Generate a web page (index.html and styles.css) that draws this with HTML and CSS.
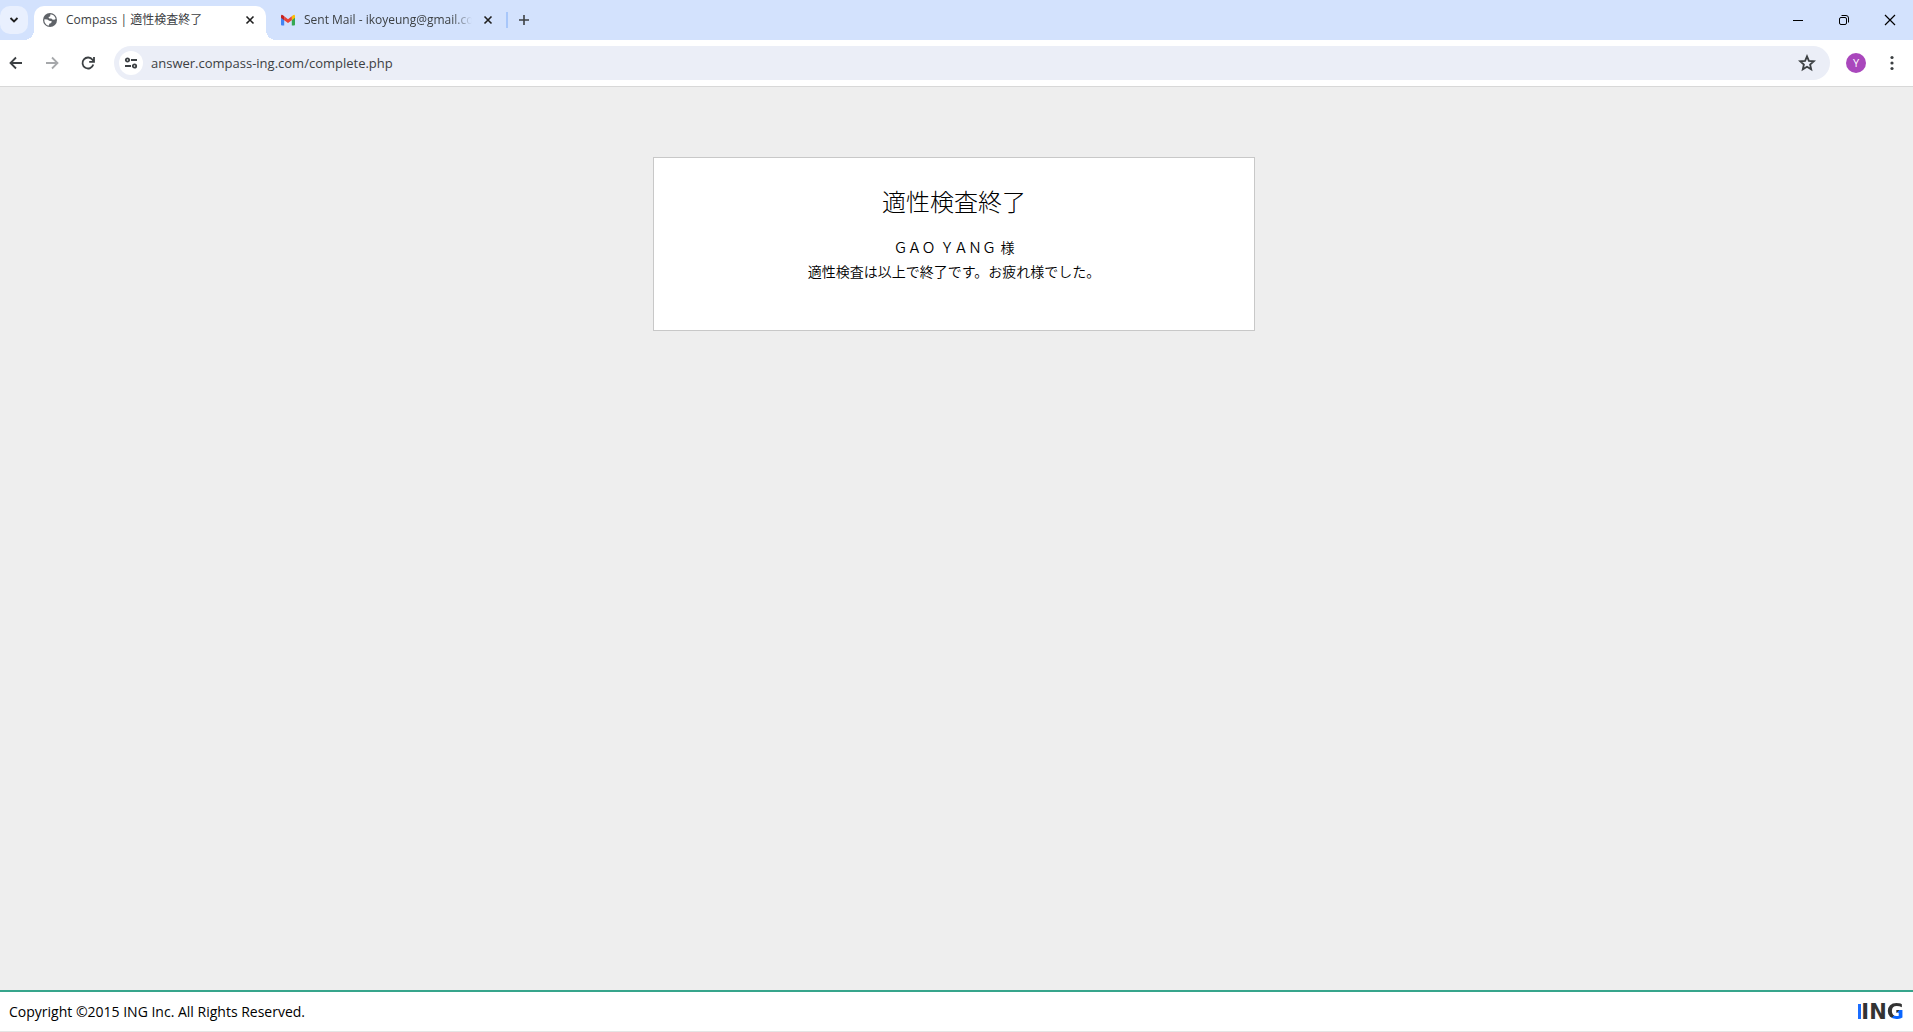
FILE: index.html
```
<!DOCTYPE html>
<html lang="ja">
<head>
<meta charset="utf-8">
<title>Compass | 適性検査終了</title>
<meta name="viewport" content="width=device-width, initial-scale=1">
<link rel="stylesheet" href="styles.css">
</head>
<body>
<header class="browser">
  <div class="tab-strip">
    <button class="tab-search" aria-label="Search tabs"><svg width="10" height="8" viewBox="0 0 10 8"><path d="M1.500 2 5 5.500 8.500 2" fill="none" stroke="currentColor" stroke-width="1.800"/></svg></button>
    <div class="tab tab-active">
      <svg class="favicon" width="16" height="16" viewBox="0 0 16 16"><circle cx="8" cy="8" r="7" fill="#5f6368"/><path d="M8.500 2.300c2.500.1 4.600 1.900 5.100 4.300l-.5 1-2.300.1-1.500-1.300-2 .2-.9-1.500 1.700-.7zM2.400 7.200l3 .4 1.800 1.100 2.600.5-.6 1.700-1.900.8-.4 1.900C4.200 13.300 2 10.600 2.400 7.200z" fill="#fff"/></svg>
      <span class="tab-title">Compass | 適性検査終了</span>
      <button class="tab-close" aria-label="Close tab"><svg width="10" height="10" viewBox="0 0 10 10"><path d="M1.500 1.500l7 7m0-7l-7 7" stroke="currentColor" stroke-width="1.600"/></svg></button>
    </div>
    <div class="tab tab-mail">
      <svg class="favicon" width="16" height="16" viewBox="0 0 16 16"><path d="M1 4v8.500q0 1 1 1h2.200V7.200z" fill="#4285f4"/><path d="M15 4v8.500q0 1-1 1h-2.200V7.200z" fill="#34a853"/><path d="M11.800 4.200 13 3.200q2-1 2 1v1.500l-3.200 2.500z" fill="#fbbc04"/><path d="M4.200 4.200 8 7.200l3.800-3v4L8 11.100 4.200 8.200z" fill="#ea4335"/><path d="M1 5.700V4.200q0-2 2-1l1.200 1v4z" fill="#c5221f"/></svg>
      <span class="tab-title tab-title-fade">Sent Mail - ikoyeung@gmail.co</span>
      <button class="tab-close" aria-label="Close tab"><svg width="10" height="10" viewBox="0 0 10 10"><path d="M1.500 1.500l7 7m0-7l-7 7" stroke="currentColor" stroke-width="1.600"/></svg></button>
    </div>
    <button class="new-tab" aria-label="New tab"><svg width="12" height="12" viewBox="0 0 12 12"><path d="M6 1v10M1 6h10" stroke="currentColor" stroke-width="1.600"/></svg></button>
    <div class="window-controls">
      <button aria-label="Minimize"><svg width="10" height="10" viewBox="0 0 10 10"><path d="M0 5.500h10" stroke="currentColor"/></svg></button>
      <button aria-label="Restore"><svg width="10" height="10" viewBox="0 0 10 10" fill="none" stroke="currentColor"><rect x=".5" y="2.500" width="7" height="7" rx="1.500"/><path d="M2.500.5H7Q9.500.5 9.500 3v4.500"/></svg></button>
      <button aria-label="Close"><svg width="12" height="12" viewBox="0 0 12 12"><path d="M1 1l10 10M11 1L1 11" stroke="currentColor" stroke-width="1.200"/></svg></button>
    </div>
  </div>
  <div class="toolbar">
    <button class="nav-button" aria-label="Back"><svg width="16" height="16" viewBox="0 0 16 16" fill="none" stroke="currentColor" stroke-width="1.800"><path d="M14 8H3M8 2.500 2.500 8 8 13.500"/></svg></button>
    <button class="nav-button" aria-label="Forward" disabled><svg width="16" height="16" viewBox="0 0 16 16" fill="none" stroke="currentColor" stroke-width="1.800"><path d="M2 8h11M8 2.500 13.500 8 8 13.500"/></svg></button>
    <button class="nav-button" aria-label="Reload"><svg width="16" height="16" viewBox="0 0 16 16" fill="none" stroke="currentColor" stroke-width="1.800"><path d="M13.300 9.500A5.500 5.500 0 1 1 12.500 4.800L13.800 6.500M14 2v4.800H9.200"/></svg></button>
    <div class="address">
      <button class="site-info" aria-label="View site information"><svg width="14" height="14" viewBox="0 0 14 14" fill="none" stroke="currentColor" stroke-width="1.800"><circle cx="3.500" cy="4" r="1.700"/><path d="M7 4h6M1 10h6"/><circle cx="10.500" cy="10" r="1.700"/></svg></button>
      <input class="url" type="text" aria-label="Address" value="answer.compass-ing.com/complete.php">
      <button class="bookmark" aria-label="Bookmark this page"><svg width="18" height="18" viewBox="0 0 18 18"><path d="M9 2.400l1.900 4.500 4.900.4-3.700 3.200 1.100 4.800L9 12.700l-4.200 2.600 1.100-4.800-3.700-3.200 4.900-.4z" fill="none" stroke="currentColor" stroke-width="1.800"/></svg></button>
    </div>
    <button class="profile" aria-label="Profile">Y</button>
    <button class="menu" aria-label="Menu"><svg width="4" height="16" viewBox="0 0 4 16" fill="currentColor"><circle cx="2" cy="2.500" r="1.600"/><circle cx="2" cy="8" r="1.600"/><circle cx="2" cy="13.500" r="1.600"/></svg></button>
  </div>
</header>
<main class="page">
  <section class="card">
    <h1>適性検査終了</h1>
    <p>ＧＡＯ ＹＡＮＧ 様</p>
    <p>適性検査は以上で終了です。お疲れ様でした。</p>
  </section>
</main>
<footer class="footer">
  <small>Copyright ©2015 ING Inc. All Rights Reserved.</small>
  <span class="logo">IN<span class="logo-g">G</span></span>
</footer>
</body>
</html>
```
FILE: styles.css
```
* { box-sizing: border-box; }
html { height: 100%; }
body {
  margin: 0;
  min-height: 100%;
  display: flex;
  flex-direction: column;
  background: #eee;
  color: #000;
  font: 14px/24px "DejaVu Sans", "Noto Sans CJK JP", sans-serif;
}
button {
  display: flex;
  align-items: center;
  justify-content: center;
  flex: none;
  padding: 0;
  border: 0;
  background: none;
  color: inherit;
  font: inherit;
}
svg { display: block; flex: none; }

.browser {
  border-bottom: 1px solid #d8d8d8;
  background: #fff;
  color: #3c4043;
  font-family: "Open Sans", "Noto Sans CJK JP", sans-serif;
}
.tab-strip {
  display: flex;
  height: 40px;
  background: #d3e2fd;
  font-size: 12px;
}
.tab-search {
  width: 28px;
  height: 28px;
  margin-top: 6px;
  border-radius: 10px;
  background: #e9f0fe;
  color: #1f1f1f;
}
.tab {
  position: relative;
  display: flex;
  align-items: center;
  gap: 8px;
  height: 34px;
  margin-top: 6px;
  padding: 0 8px;
}
.tab-active {
  width: 232px;
  margin-left: 6px;
  padding-bottom: 6px;
  border-radius: 10px 10px 0 0;
  background: #fff;
}
.tab-active::before,
.tab-active::after {
  content: "";
  position: absolute;
  bottom: 0;
  width: 10px;
  height: 10px;
}
.tab-active::before {
  right: 100%;
  background: radial-gradient(circle at 0 0, transparent 10px, #fff 10px);
}
.tab-active::after {
  left: 100%;
  background: radial-gradient(circle at 100% 0, transparent 10px, #fff 10px);
}
.tab-mail {
  width: 242px;
  padding: 0 12px 6px 14px;
}
.tab-mail::after {
  content: "";
  position: absolute;
  top: 6px;
  right: 0;
  width: 2px;
  height: 16px;
  background: #a8c7fa;
}
.tab-title {
  flex: 1;
  min-width: 0;
  white-space: nowrap;
}
.tab-title-fade {
  -webkit-mask-image: linear-gradient(to right, #000 88%, transparent);
  mask-image: linear-gradient(to right, #000 88%, transparent);
}
.tab-close { width: 16px; height: 16px; color: #1f1f1f; }
.new-tab { width: 32px; height: 40px; }
.window-controls { display: flex; margin-left: auto; color: #000; }
.window-controls button { width: 46px; height: 40px; }

.toolbar {
  display: flex;
  align-items: center;
  height: 46px;
  padding-right: 19px;
}
.nav-button { width: 32px; height: 32px; margin-right: 4px; }
.nav-button:disabled { color: #a6a8ab; }
.address {
  flex: 1;
  display: flex;
  align-items: center;
  gap: 8px;
  height: 34px;
  margin: 0 16px 0 6px;
  padding: 0 14px 0 5px;
  border-radius: 17px;
  background: #ebeef7;
}
.site-info { width: 24px; height: 24px; border-radius: 50%; background: #fff; }
.url {
  flex: 1;
  min-width: 0;
  padding: 0;
  border: 0;
  background: none;
  color: inherit;
  font: inherit;
  font-size: 13px;
}
.profile {
  width: 20px;
  height: 20px;
  margin-right: 24px;
  border-radius: 50%;
  background: #a947bc;
  color: #fff;
  font-size: 11px;
}

.page { flex: 1; padding: 70px 5px 24px 0; }
.card {
  max-width: 602px;
  margin: 0 auto;
  padding: 26px 24px 46px;
  border: 1px solid #c8c8c8;
  background: #fff;
  font-weight: 350;
  text-align: center;
}
.card h1 {
  margin: 0 0 14px;
  font-size: 24px;
  font-weight: 300;
  line-height: 38px;
}
.card p { margin: 0; }

.footer {
  display: flex;
  align-items: center;
  justify-content: space-between;
  height: 42px;
  padding: 0 9px;
  border-top: 2px solid #36a58c;
  border-bottom: 1px solid #e5e5e5;
  background: #fff;
}
.footer small { font-family: "Open Sans", sans-serif; font-size: 14px; }
.logo { color: #333; font-size: 21px; font-weight: 700; }
.logo::before {
  content: "";
  display: inline-block;
  width: 3px;
  height: 15px;
  background: #1a6dff;
}
.logo-g {
  background: linear-gradient(135deg, #333 54%, #0a66ff 54%);
  -webkit-background-clip: text;
  background-clip: text;
  color: transparent;
}
```
